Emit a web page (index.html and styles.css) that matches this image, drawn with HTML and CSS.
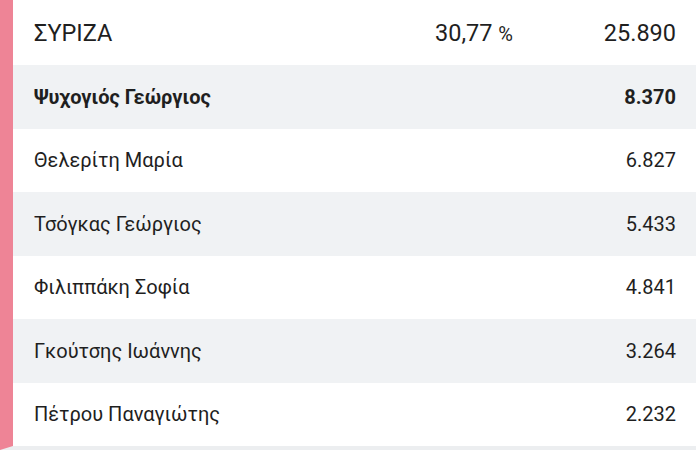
FILE: index.html
```html
<!DOCTYPE html>
<html lang="el">
<head>
<meta charset="utf-8">
<link rel="stylesheet" href="styles.css">
</head>
<body>
<div class="card">
  <div class="party">
    <div class="header">
      <span class="name">ΣΥΡΙΖΑ</span>
      <span class="pct">30,77 <small>%</small></span>
      <span class="votes">25.890</span>
    </div>
    <div class="row alt top"><span class="cand">Ψυχογιός Γεώργιος</span><span class="num">8.370</span></div>
    <div class="row"><span class="cand">Θελερίτη Μαρία</span><span class="num">6.827</span></div>
    <div class="row alt"><span class="cand">Τσόγκας Γεώργιος</span><span class="num">5.433</span></div>
    <div class="row"><span class="cand">Φιλιππάκη Σοφία</span><span class="num">4.841</span></div>
    <div class="row alt"><span class="cand">Γκούτσης Ιωάννης</span><span class="num">3.264</span></div>
    <div class="row"><span class="cand">Πέτρου Παναγιώτης</span><span class="num">2.232</span></div>
  </div>
</div>
</body>
</html>
```
FILE: styles.css
```css
html, body {
  margin: 0;
  padding: 0;
  background: #ffffff;
}
body {
  font-family: Roboto, "Noto Sans", sans-serif;
  color: #1f1f1f;
  width: 696px;
  height: 450px;
  overflow: hidden;
}
.card {
  border-left: 13px solid #ee8496;
  border-bottom: 4px solid #eceef0;
}
.party {
  display: flex;
  flex-direction: column;
}
.header {
  height: 65px;
  display: flex;
  align-items: center;
  padding: 0 20px 0 21px;
  font-size: 23.5px;
}
.header .name {
  flex: 1;
}
.header .pct {
  width: 80px;
}
.header .pct small {
  font-size: 20px;
}
.header .votes {
  width: 161px;
  text-align: right;
}
.row {
  height: 63.5px;
  display: flex;
  align-items: center;
  justify-content: space-between;
  padding: 0 20px 0 21px;
  font-size: 20px;
}
.row.alt {
  background: #f0f2f4;
}
.row.top {
  font-weight: 700;
}
```
